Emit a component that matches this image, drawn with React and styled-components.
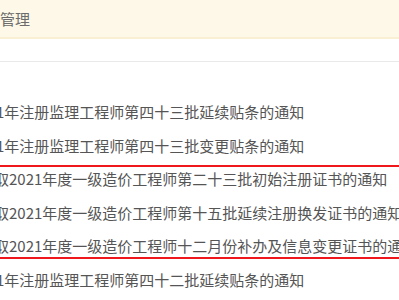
import React from 'react';
import styled, { createGlobalStyle } from 'styled-components';

const GlobalStyle = createGlobalStyle`
  html, body {
    margin: 0;
    padding: 0;
    background: #fff;
    overflow: hidden;
  }
  body {
    font-family: "Noto Sans CJK SC", "Noto Sans", sans-serif;
  }
`;

const Page = styled.div`
  width: 399px;
  height: 300px;
  overflow: hidden;
  background: #fff;
`;

const Crumb = styled.div`
  height: 37px;
  background: #fdf8e7;
  border-bottom: 2px solid #faefd2;
  display: flex;
  align-items: center;
  padding-left: 0;
  font-size: 15px;
  color: #6b6b6b;
  white-space: nowrap;
`;

const Divider = styled.div`
  margin-top: 22px;
  border-top: 1px solid #e9e9e9;
`;

const List = styled.ul`
  list-style: none;
  margin: 33px 0 0;
  padding: 0;
`;

const Item = styled.li`
  height: 33.6px;
  line-height: 33.6px;
  font-size: 15px;
  color: #555;
  white-space: nowrap;
  margin-left: ${(p) => p.$indent}px;
`;

const Marked = styled.div`
  position: relative;
  &::after {
    content: '';
    position: absolute;
    top: 3px;
    bottom: 4px;
    left: -20px;
    right: -20px;
    border: 2px solid #f0171c;
    pointer-events: none;
  }
`;

const notices = [
  { text: '2021年注册监理工程师第四十三批延续贴条的通知', indent: -29 },
  { text: '2021年注册监理工程师第四十三批变更贴条的通知', indent: -29 },
];

const marked = [
  { text: '取2021年度一级造价工程师第二十三批初始注册证书的通知', indent: -6 },
  { text: '取2021年度一级造价工程师第十五批延续注册换发证书的通知', indent: -6 },
  { text: '取2021年度一级造价工程师十二月份补办及信息变更证书的通知', indent: -6 },
];

const tail = [
  { text: '2021年注册监理工程师第四十二批延续贴条的通知', indent: -29 },
];

export default function App() {
  return (
    <Page>
      <GlobalStyle />
      <Crumb>管理</Crumb>
      <Divider />
      <List>
        {notices.map((n) => (
          <Item key={n.text} $indent={n.indent}>{n.text}</Item>
        ))}
        <Marked>
          {marked.map((n) => (
            <Item key={n.text} $indent={n.indent}>{n.text}</Item>
          ))}
        </Marked>
        {tail.map((n) => (
          <Item key={n.text} $indent={n.indent}>{n.text}</Item>
        ))}
      </List>
    </Page>
  );
}
